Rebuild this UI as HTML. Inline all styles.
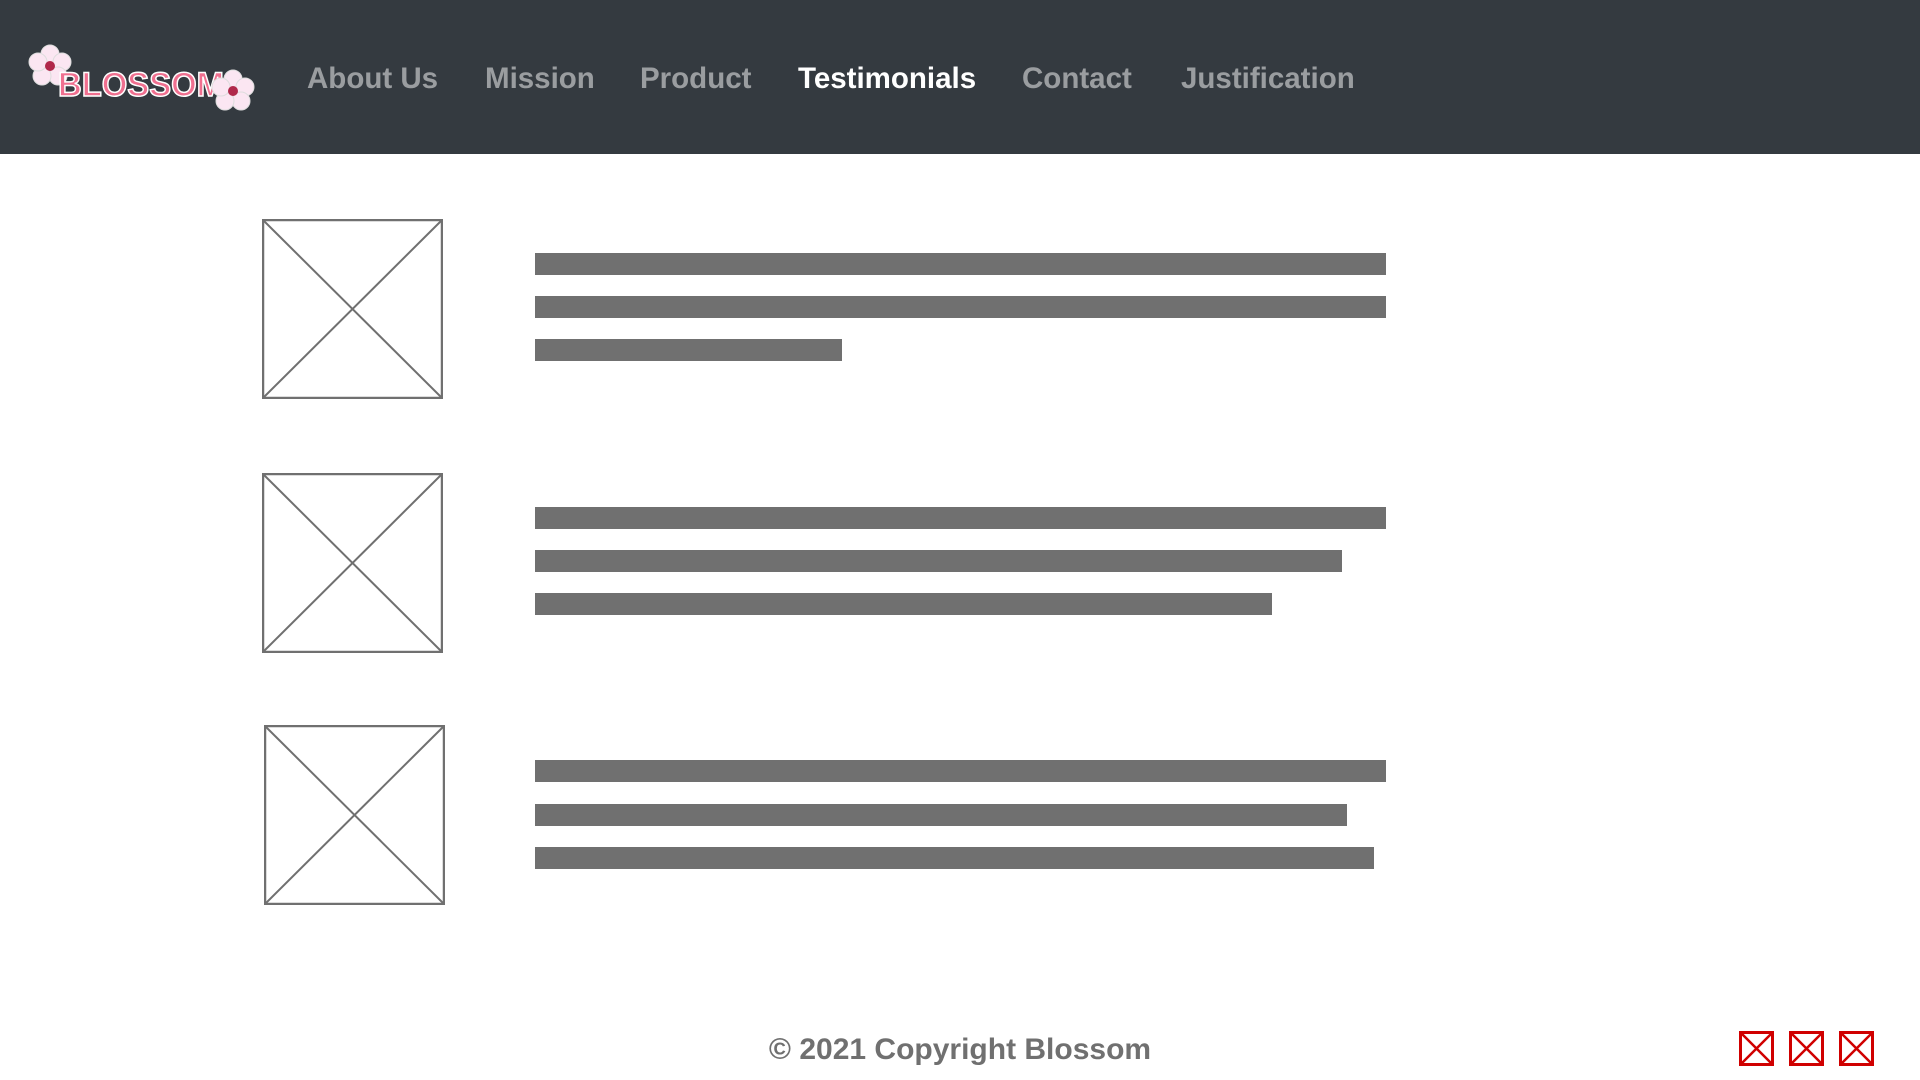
<!DOCTYPE html>
<html><head><style>
body{margin:0;width:1920px;height:1080px;background:#fff;font-family:"Liberation Sans",Arial,sans-serif;position:relative;overflow:hidden}
.hdr{position:absolute;left:0;top:0;width:1920px;height:154px;background:#343a40}
.nav{position:absolute;top:62px;font-size:29.5px;font-weight:bold;color:rgba(255,255,255,.5);white-space:nowrap}
.ph{position:absolute;width:181px;height:180px}
.bar{position:absolute;left:535px;height:22px;background:#707070}
.ic{position:absolute;top:1031px;width:35px;height:35px}
</style></head><body>
<div class="hdr">
<svg style="position:absolute;left:26px;top:40px" width="230" height="75" viewBox="0 0 230 75">
<g fill="#fbe6f2" stroke="#ddd" stroke-width="1">
<circle cx="24" cy="14" r="9"/><circle cx="36" cy="22" r="9"/><circle cx="32" cy="36" r="9"/><circle cx="16" cy="36" r="9"/><circle cx="12" cy="22" r="9"/>
</g><circle cx="24" cy="26" r="5" fill="#b0284a"/>
<text x="32" y="56" font-family="Liberation Sans" font-weight="bold" font-size="34" fill="#f07090" stroke="#fff" stroke-width="1.5" textLength="166" lengthAdjust="spacingAndGlyphs">BLOSSOM</text>
<g fill="#fbe6f2" stroke="#ddd" stroke-width="1">
<circle cx="207" cy="39" r="9"/><circle cx="219" cy="47" r="9"/><circle cx="215" cy="61" r="9"/><circle cx="199" cy="61" r="9"/><circle cx="195" cy="47" r="9"/>
</g><circle cx="207" cy="51" r="5" fill="#b0284a"/>
</svg>
<div class="nav" style="left:307px">About Us</div>
<div class="nav" style="left:485px">Mission</div>
<div class="nav" style="left:640px">Product</div>
<div class="nav" style="left:798px;color:#fff">Testimonials</div>
<div class="nav" style="left:1022px">Contact</div>
<div class="nav" style="left:1181px">Justification</div>
</div>
<svg class="ph" style="left:262px;top:219px" viewBox="0 0 181 180" preserveAspectRatio="none"><rect x="1" y="1" width="179" height="178" fill="none" stroke="#707070" stroke-width="2.5"/><path d="M1 1L180 179M180 1L1 179" stroke="#707070" stroke-width="2"/></svg>
<svg class="ph" style="left:262px;top:473px" viewBox="0 0 181 180" preserveAspectRatio="none"><rect x="1" y="1" width="179" height="178" fill="none" stroke="#707070" stroke-width="2.5"/><path d="M1 1L180 179M180 1L1 179" stroke="#707070" stroke-width="2"/></svg>
<svg class="ph" style="left:264px;top:725px" viewBox="0 0 181 180" preserveAspectRatio="none"><rect x="1" y="1" width="179" height="178" fill="none" stroke="#707070" stroke-width="2.5"/><path d="M1 1L180 179M180 1L1 179" stroke="#707070" stroke-width="2"/></svg>
<div class="bar" style="top:253px;width:851px"></div>
<div class="bar" style="top:296px;width:851px"></div>
<div class="bar" style="top:339px;width:307px"></div>
<div class="bar" style="top:507px;width:851px"></div>
<div class="bar" style="top:550px;width:807px"></div>
<div class="bar" style="top:593px;width:737px"></div>
<div class="bar" style="top:760px;width:851px"></div>
<div class="bar" style="top:804px;width:812px"></div>
<div class="bar" style="top:847px;width:839px"></div>
<div style="position:absolute;left:0;width:1920px;text-align:center;top:1033px;font-size:30px;font-weight:bold;color:#707070">© 2021 Copyright Blossom</div>
<svg class="ic" style="left:1739px" viewBox="0 0 35 35"><rect x="1.5" y="1.5" width="32" height="32" fill="none" stroke="#d00000" stroke-width="3"/><path d="M2 2L33 33M33 2L2 33" stroke="#d00000" stroke-width="2.5"/></svg>
<svg class="ic" style="left:1789px" viewBox="0 0 35 35"><rect x="1.5" y="1.5" width="32" height="32" fill="none" stroke="#d00000" stroke-width="3"/><path d="M2 2L33 33M33 2L2 33" stroke="#d00000" stroke-width="2.5"/></svg>
<svg class="ic" style="left:1839px" viewBox="0 0 35 35"><rect x="1.5" y="1.5" width="32" height="32" fill="none" stroke="#d00000" stroke-width="3"/><path d="M2 2L33 33M33 2L2 33" stroke="#d00000" stroke-width="2.5"/></svg>
</body></html>
